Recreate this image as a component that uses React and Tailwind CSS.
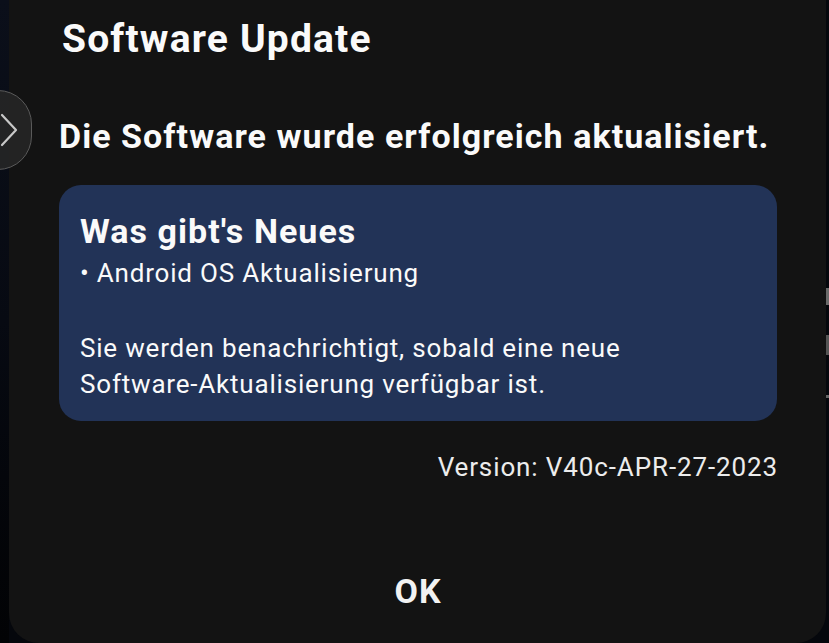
import React from "react";

const App = () => {
    return (
        <div className="relative flex h-[643px] w-[829px] overflow-hidden bg-[#05070c] font-['Roboto',sans-serif] text-[#fafafa]">
            {/* left edge of the screen behind */}
            <div className="w-[9px] shrink-0 bg-gradient-to-b from-[#0b0f1a] via-[#070a12] to-[#020305]" />

            {/* Dialog */}
            <div className="flex flex-1 flex-col rounded-b-[30px] bg-[#131313] pr-[49px] pl-[50px]">
                <h1 className="pt-[16px] pl-[3px] text-[39px] leading-[46px] font-bold tracking-[0.03em]">Software Update</h1>

                <h2 className="mt-[54px] text-[34px] leading-[40px] font-bold tracking-[0.031em]">
                    Die Software wurde erfolgreich aktualisiert.
                </h2>

                <div className="mt-[29px] rounded-[22px] bg-[#223357] px-[21px] pt-[26px] pb-[19px]">
                    <h3 className="text-[34px] leading-[40px] font-bold tracking-[0.031em]">Was gibt's Neues</h3>
                    <p className="mt-[4px] text-[26px] leading-[36px] tracking-[0.031em]">• Android OS Aktualisierung</p>
                    <p className="mt-[39px] text-[26px] leading-[36px] tracking-[0.031em]">
                        Sie werden benachrichtigt, sobald eine neue
                        <br />
                        Software-Aktualisierung verfügbar ist.
                    </p>
                </div>

                <p className="mt-[28px] -mr-[1px] text-right text-[26px] leading-[36px] tracking-[0.034em] text-[#ececec]">
                    Version: V40c-APR-27-2023
                </p>

                <button className="mt-[86px] self-center text-[34px] leading-[40px] font-bold tracking-[0.03em] text-[#f2f2f2]">
                    OK
                </button>
            </div>

            {/* right edge */}
            <div className="flex w-[3px] shrink-0 flex-col">
                <div className="h-[288px]" />
                <div className="h-[17px] bg-[#6b6b6b]" />
                <div className="h-[30px]" />
                <div className="h-[20px] bg-[#555]" />
                <div className="h-[40px]" />
                <div className="h-[3px] bg-[#666]" />
            </div>

            {/* floating nav button */}
            <div className="absolute top-[90px] left-[-36px] flex h-[80px] w-[68px] items-center justify-end rounded-full border border-[#5a5a5a] bg-[#262626]/90 pr-[12px]">
                <svg width="20" height="34" viewBox="0 0 20 34" fill="none">
                    <path d="M3 2 L17 17 L3 32" stroke="#c8c8c8" strokeWidth="2.2" strokeLinecap="round" strokeLinejoin="round" />
                </svg>
            </div>
        </div>
    );
};

export default App;
